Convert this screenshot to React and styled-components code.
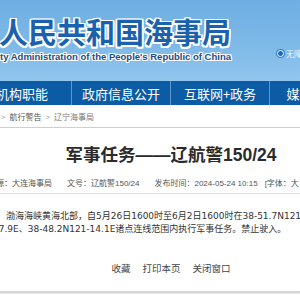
import React from "react";
import styled, { createGlobalStyle } from "styled-components";

const GlobalStyle = createGlobalStyle`
  html, body {
    margin: 0;
    padding: 0;
    background: #ffffff;
    overflow: hidden;
  }
  body {
    font-family: "Liberation Sans", "Noto Sans CJK SC", sans-serif;
  }
`;

const navItems = ["机构职能", "政府信息公开", "互联网+政务", "媒体与公众"];
const metaItems = [
  "来源：大连海事局",
  "文号：辽航警150/24",
  "发布时间：2024-05-24 10:15",
];
const actions = ["收藏", "打印本页", "关闭窗口"];

export default function App() {
  return (
    <Page>
      <GlobalStyle />
      <Header>
        <Brand>
          <BrandCn>中华人民共和国海事局</BrandCn>
          <BrandEn>Maritime Safety Administration of the People's Republic of China</BrandEn>
        </Brand>
        <Tools>
          <RadioDot />
          <ToolText>无障碍</ToolText>
        </Tools>
      </Header>
      <Nav>
        <NavList>
          {navItems.map((item) => (
            <NavItem key={item}>{item}</NavItem>
          ))}
        </NavList>
      </Nav>
      <Breadcrumb>
        <Crumb $light>&gt;</Crumb>
        <Crumb>航行警告</Crumb>
        <Crumb $light>&gt;</Crumb>
        <Crumb $muted>辽宁海事局</Crumb>
      </Breadcrumb>
      <Main>
        <Title>军事任务——辽航警150/24</Title>
        <Meta>
          {metaItems.map((item) => (
            <MetaItem key={item}>{item}</MetaItem>
          ))}
          <FontSwitch>[字体：大 中 小]</FontSwitch>
        </Meta>
        <Body>
          <Line $indent>
            渤海海峡黄海北部，自5月26日1600时至6月2日1600时在38-51.7N121-32.4E、38-54.0N12
          </Line>
          <Line>1-27.9E、38-48.2N121-14.1E诸点连线范围内执行军事任务。禁止驶入。</Line>
        </Body>
        <Actions>
          {actions.map((item) => (
            <ActionLink key={item}>{item}</ActionLink>
          ))}
        </Actions>
      </Main>
      <Footer />
    </Page>
  );
}

const Page = styled.div`
  width: 300px;
  height: 300px;
  overflow: hidden;
  background: #ffffff;
`;

const Header = styled.header`
  display: flex;
  align-items: flex-start;
  height: 81px;
  background: linear-gradient(180deg, #6eaee2 0%, #7fbae8 60%, #92c6ee 100%);
`;

const Brand = styled.div`
  display: flex;
  flex-direction: column;
  align-items: flex-end;
  width: 231px;
  flex-shrink: 0;
  padding-top: 15px;
`;

const outline = (w, c) =>
  `${w}px 0 ${c}, -${w}px 0 ${c}, 0 ${w}px ${c}, 0 -${w}px ${c}, ${w}px ${w}px ${c}, -${w}px ${w}px ${c}, ${w}px -${w}px ${c}, -${w}px -${w}px ${c}`;

const BrandCn = styled.div`
  font-family: "Noto Sans CJK SC", sans-serif;
  font-weight: 700;
  font-size: 29px;
  line-height: 32px;
  color: #1a62ad;
  white-space: nowrap;
  text-shadow: ${outline(1.5, "#ffffff")};
`;

const BrandEn = styled.div`
  margin-top: 4px;
  font-family: "Liberation Sans", sans-serif;
  font-weight: 700;
  font-size: 9.5px;
  line-height: 12px;
  color: #1d4c88;
  white-space: nowrap;
  text-shadow: ${outline(1, "#ffffff")};
`;

const Tools = styled.div`
  display: flex;
  align-items: center;
  gap: 2px;
  margin-left: 46px;
  padding-top: 48px;
  white-space: nowrap;
`;

const RadioDot = styled.span`
  width: 5px;
  height: 5px;
  border-radius: 50%;
  background: #1767c4;
  border: 1px solid #ffffff;
  box-shadow: 0 0 0 1px #2f7fd0;
`;

const ToolText = styled.span`
  font-family: "Noto Sans CJK SC", sans-serif;
  font-size: 8px;
  color: #eaf4fc;
`;

const Nav = styled.nav`
  height: 24px;
  background: #0c5ba5;
  overflow: hidden;
`;

const NavList = styled.div`
  display: flex;
  margin-left: -27px;
`;

const NavItem = styled.div`
  flex-shrink: 0;
  width: 98px;
  height: 24px;
  border-right: 1px solid #5f97cc;
  display: flex;
  align-items: center;
  justify-content: center;
  font-family: "Noto Sans CJK SC", sans-serif;
  font-size: 13px;
  color: #ffffff;
  white-space: nowrap;
`;

const Breadcrumb = styled.div`
  display: flex;
  align-items: center;
  gap: 4px;
  height: 22px;
  padding-left: 1px;
  border-bottom: 1px solid #cfcfcf;
`;

const Crumb = styled.span`
  font-family: "Noto Sans CJK SC", sans-serif;
  font-size: 8px;
  color: ${(props) => (props.$light ? "#9a9a9a" : props.$muted ? "#777777" : "#555555")};
`;

const Main = styled.main`
  width: 366px;
  margin-left: -40px;
  padding: 0 28px;
`;

const Title = styled.h1`
  margin: 17px 0 0;
  font-family: "Liberation Sans", "Noto Sans CJK SC", sans-serif;
  font-weight: 700;
  font-size: 17.5px;
  line-height: 20px;
  color: #2b2b2b;
  text-align: center;
  white-space: nowrap;
`;

const Meta = styled.div`
  display: flex;
  gap: 15px;
  margin-top: 13px;
  padding-bottom: 3px;
  border-bottom: 1px solid #e2e2e2;
  white-space: nowrap;
`;

const MetaItem = styled.span`
  font-family: "Liberation Sans", "Noto Sans CJK SC", sans-serif;
  font-size: 8px;
  line-height: 12px;
  color: #555555;
`;

const FontSwitch = styled(MetaItem)`
  margin-left: -8px;
`;

const Body = styled.div`
  margin: 16px 0 0 -4px;
  font-family: "DejaVu Sans", "Noto Sans CJK SC", sans-serif;
  font-size: 9px;
  line-height: 13px;
  color: #333333;
`;

const Line = styled.p`
  margin: 0;
  white-space: nowrap;
  text-indent: ${(props) => (props.$indent ? "22px" : "0")};
`;

const Actions = styled.div`
  display: flex;
  justify-content: center;
  gap: 12px;
  margin-top: 26px;
`;

const ActionLink = styled.span`
  font-family: "Noto Sans CJK SC", sans-serif;
  font-size: 9.5px;
  line-height: 12px;
  color: #444444;
`;

const Footer = styled.div`
  margin-top: 17px;
  height: 2px;
  background: #d6d6d6;
  box-shadow: 0 1px 1px #e6e6e6;
`;
